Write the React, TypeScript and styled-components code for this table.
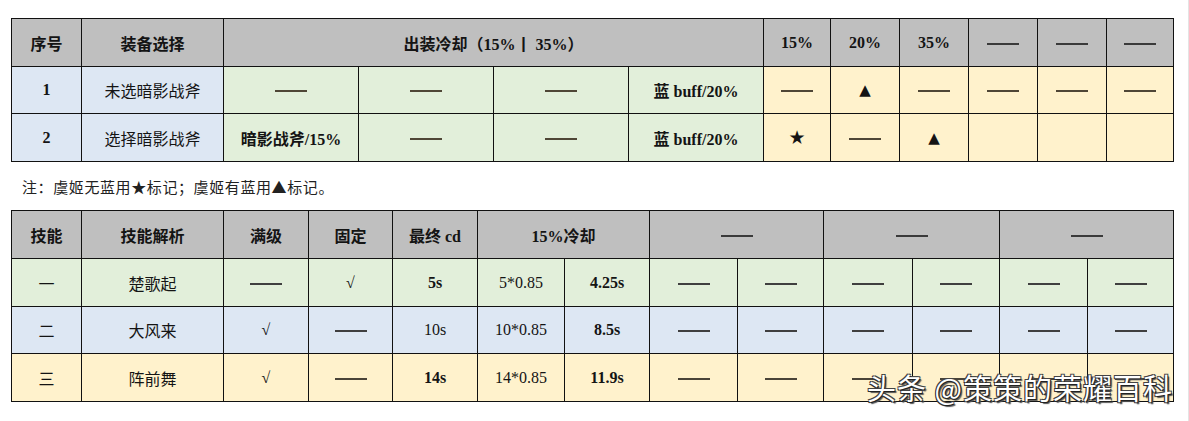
import React from "react";
import styled, { createGlobalStyle } from "styled-components";

const Global = createGlobalStyle`
  html, body { margin: 0; padding: 0; background: #ffffff; }
  body { font-family: "Liberation Serif", "Noto Sans CJK SC", serif; color: #111; }
`;

type Tone = "gray" | "blue" | "green" | "yellow";
const toneColor: Record<Tone, string> = {
  gray: "#bfbfbf",
  blue: "#dde7f3",
  green: "#e2efda",
  yellow: "#fff2cc",
};

const Page = styled.div`
  position: relative;
  width: 1189px;
  height: 421px;
  box-sizing: border-box;
  padding: 18px 0 0 11px;
  border-right: 1px solid #e4e4e4;
`;

const Table = styled.table`
  border-collapse: collapse;
  table-layout: fixed;
  width: 1163px;
  font-family: "Liberation Serif", "Noto Sans CJK SC", serif;
  font-size: 16px;
`;

const Row = styled.tr<{ $h: number }>`
  height: ${(p) => p.$h}px;
`;

const Cell = styled.td<{ $tone: Tone; $bold?: boolean; $whiteLeft?: boolean }>`
  background: ${(p) => toneColor[p.$tone]};
  border: 1px solid #111;
  ${(p) => (p.$whiteLeft ? "border-left-color: #ffffff;" : "")}
  text-align: center;
  vertical-align: middle;
  padding: 0;
  font-weight: ${(p) => (p.$bold ? 700 : 400)};
  color: #141414;
  white-space: nowrap;
  overflow: hidden;
`;

const Dash = styled.span<{ $color?: string }>`
  display: inline-block;
  width: 32px;
  height: 2px;
  background: ${(p) => p.$color || "#4f4636"};
  vertical-align: middle;
`;

const Note = styled.div`
  height: 48px;
  display: flex;
  align-items: center;
  padding-left: 11px;
  font-family: "Noto Sans CJK SC", sans-serif;
  font-size: 15px;
  color: #222;
  letter-spacing: 0.6px;
`;

const Mark = styled.span<{ $size: number }>`
  font-family: "DejaVu Sans", sans-serif;
  font-size: ${(p) => p.$size}px;
  line-height: 1;
`;

const Watermark = styled.div`
  position: absolute;
  left: 867px;
  top: 369px;
  font-family: "Noto Sans CJK SC", sans-serif;
  font-size: 29px;
  line-height: 36px;
  color: #ffffff;
  letter-spacing: 1px;
  text-shadow: 1px 1px 0 #222, -1px 1px 0 #333, 1px -1px 0 #444, -1px -1px 0 #444, 2px 2px 1px #555;
  white-space: nowrap;
`;

type C = {
  t: React.ReactNode;
  tone: Tone;
  span?: number;
  bold?: boolean;
  whiteLeft?: boolean;
};

const DASH = "__dash__";

const render = (c: C, i: number, dashColor?: string) => (
  <Cell key={i} $tone={c.tone} $bold={c.bold} colSpan={c.span} $whiteLeft={c.whiteLeft}>
    {c.t === DASH ? <Dash $color={dashColor} /> : c.t}
  </Cell>
);

const t1Cols = [70, 142, 135, 135, 135, 135, 67, 69, 69, 69, 69, 67];
const t2Cols = [70, 142, 85, 84, 85, 87, 85, 88, 86, 89, 87, 88, 86];

const t1Head: C[] = [
  { t: "序号", tone: "gray", bold: true },
  { t: "装备选择", tone: "gray", bold: true },
  { t: "出装冷却（15%丨 35%）", tone: "gray", span: 4, bold: true },
  { t: "15%", tone: "gray", bold: true },
  { t: "20%", tone: "gray", bold: true },
  { t: "35%", tone: "gray", bold: true },
  { t: DASH, tone: "gray", whiteLeft: true },
  { t: DASH, tone: "gray" },
  { t: DASH, tone: "gray" },
];

const tri = <Mark $size={15}>▲</Mark>;
const star = <Mark $size={19}>★</Mark>;

const t1Rows: C[][] = [
  [
    { t: "1", tone: "blue", bold: true },
    { t: "未选暗影战斧", tone: "blue" },
    { t: DASH, tone: "green" },
    { t: DASH, tone: "green" },
    { t: DASH, tone: "green" },
    { t: "蓝 buff/20%", tone: "green", bold: true },
    { t: DASH, tone: "yellow" },
    { t: tri, tone: "yellow" },
    { t: DASH, tone: "yellow" },
    { t: DASH, tone: "yellow" },
    { t: DASH, tone: "yellow" },
    { t: DASH, tone: "yellow" },
  ],
  [
    { t: "2", tone: "blue", bold: true },
    { t: "选择暗影战斧", tone: "blue" },
    { t: "暗影战斧/15%", tone: "green", bold: true },
    { t: DASH, tone: "green" },
    { t: DASH, tone: "green" },
    { t: "蓝 buff/20%", tone: "green", bold: true },
    { t: star, tone: "yellow" },
    { t: DASH, tone: "yellow" },
    { t: tri, tone: "yellow" },
    { t: "", tone: "yellow" },
    { t: "", tone: "yellow" },
    { t: "", tone: "yellow" },
  ],
];

const t2Head: C[] = [
  { t: "技能", tone: "gray", bold: true },
  { t: "技能解析", tone: "gray", bold: true },
  { t: "满级", tone: "gray", bold: true },
  { t: "固定", tone: "gray", bold: true },
  { t: "最终 cd", tone: "gray", bold: true },
  { t: "15%冷却", tone: "gray", span: 2, bold: true },
  { t: DASH, tone: "gray", span: 2 },
  { t: DASH, tone: "gray", span: 2 },
  { t: DASH, tone: "gray", span: 2, whiteLeft: true },
];

const skill = (
  tone: Tone,
  num: string,
  name: string,
  full: React.ReactNode,
  fixed: React.ReactNode,
  cd: string,
  cdBold: boolean,
  calc: string,
  result: string
): C[] => [
  { t: num, tone },
  { t: name, tone },
  { t: full, tone },
  { t: fixed, tone },
  { t: cd, tone, bold: cdBold },
  { t: calc, tone },
  { t: result, tone, bold: true },
  ...Array.from({ length: 6 }, () => ({ t: DASH, tone } as C)),
];

const t2Rows: C[][] = [
  skill("green", "一", "楚歌起", DASH, "√", "5s", true, "5*0.85", "4.25s"),
  skill("blue", "二", "大风来", "√", DASH, "10s", false, "10*0.85", "8.5s"),
  skill("yellow", "三", "阵前舞", "√", DASH, "14s", true, "14*0.85", "11.9s"),
];

const Cols = ({ widths }: { widths: number[] }) => (
  <colgroup>
    {widths.map((w, i) => (
      <col key={i} style={{ width: w }} />
    ))}
  </colgroup>
);

export default function App() {
  return (
    <Page>
      <Global />
      <Table>
        <Cols widths={t1Cols} />
        <tbody>
          <Row $h={48}>{t1Head.map((c, i) => render(c, i, "#3a3a3a"))}</Row>
          <Row $h={47}>{t1Rows[0].map((c, i) => render(c, i))}</Row>
          <Row $h={48}>{t1Rows[1].map((c, i) => render(c, i))}</Row>
        </tbody>
      </Table>
      <Note>注：虞姬无蓝用★标记；虞姬有蓝用▲标记。</Note>
      <Table>
        <Cols widths={t2Cols} />
        <tbody>
          <Row $h={48}>{t2Head.map((c, i) => render(c, i, "#3a3a3a"))}</Row>
          <Row $h={48}>{t2Rows[0].map((c, i) => render(c, i, "#3f3f3f"))}</Row>
          <Row $h={47}>{t2Rows[1].map((c, i) => render(c, i, "#3f3f3f"))}</Row>
          <Row $h={48}>{t2Rows[2].map((c, i) => render(c, i, "#4a4438"))}</Row>
        </tbody>
      </Table>
      <Watermark>头条 @策策的荣耀百科</Watermark>
    </Page>
  );
}
